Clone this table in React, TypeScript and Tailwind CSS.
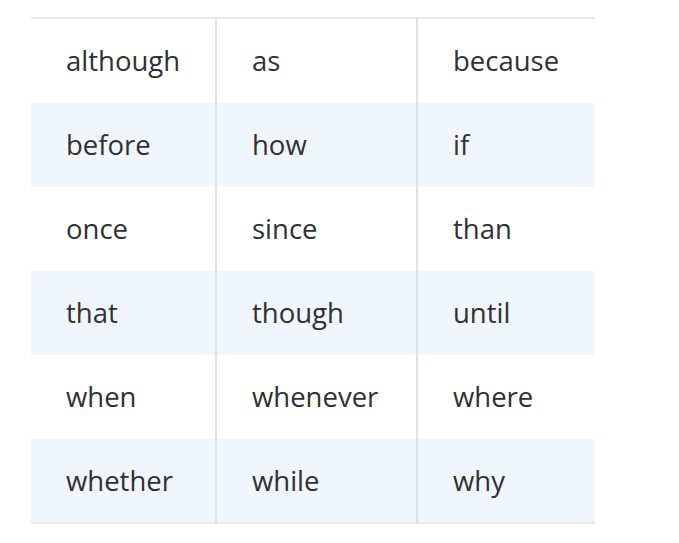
const rows = [
  ['although', 'as', 'because'],
  ['before', 'how', 'if'],
  ['once', 'since', 'than'],
  ['that', 'though', 'until'],
  ['when', 'whenever', 'where'],
  ['whether', 'while', 'why'],
]

export default function App() {
  return (
    <div className="min-h-[543px] w-[679px] bg-white pt-[17px] pl-[31px]" style={{ fontFamily: '"Open Sans", sans-serif' }}>
      <table className="w-[564px] table-fixed border-collapse border-t-2 border-b-2 border-[#e3e9ee] text-[27.5px] text-[#2f3133]">
        <colgroup>
          <col className="w-[185px]" />
          <col className="w-[201px]" />
          <col className="w-[178px]" />
        </colgroup>
        <tbody>
          {rows.map((row, i) => (
            <tr
              key={i}
              className={i === 0 ? 'h-[85px] bg-white' : i % 2 === 1 ? 'h-[84px] bg-[#f0f6fb]' : 'h-[84px] bg-white'}
            >
              {row.map((word, j) => (
                <td
                  key={word}
                  className={j < 2 ? 'border-r-2 border-[#dbe2e8] pl-[35px] align-middle' : 'pl-[35px] align-middle'}
                >
                  {word}
                </td>
              ))}
            </tr>
          ))}
        </tbody>
      </table>
    </div>
  )
}
